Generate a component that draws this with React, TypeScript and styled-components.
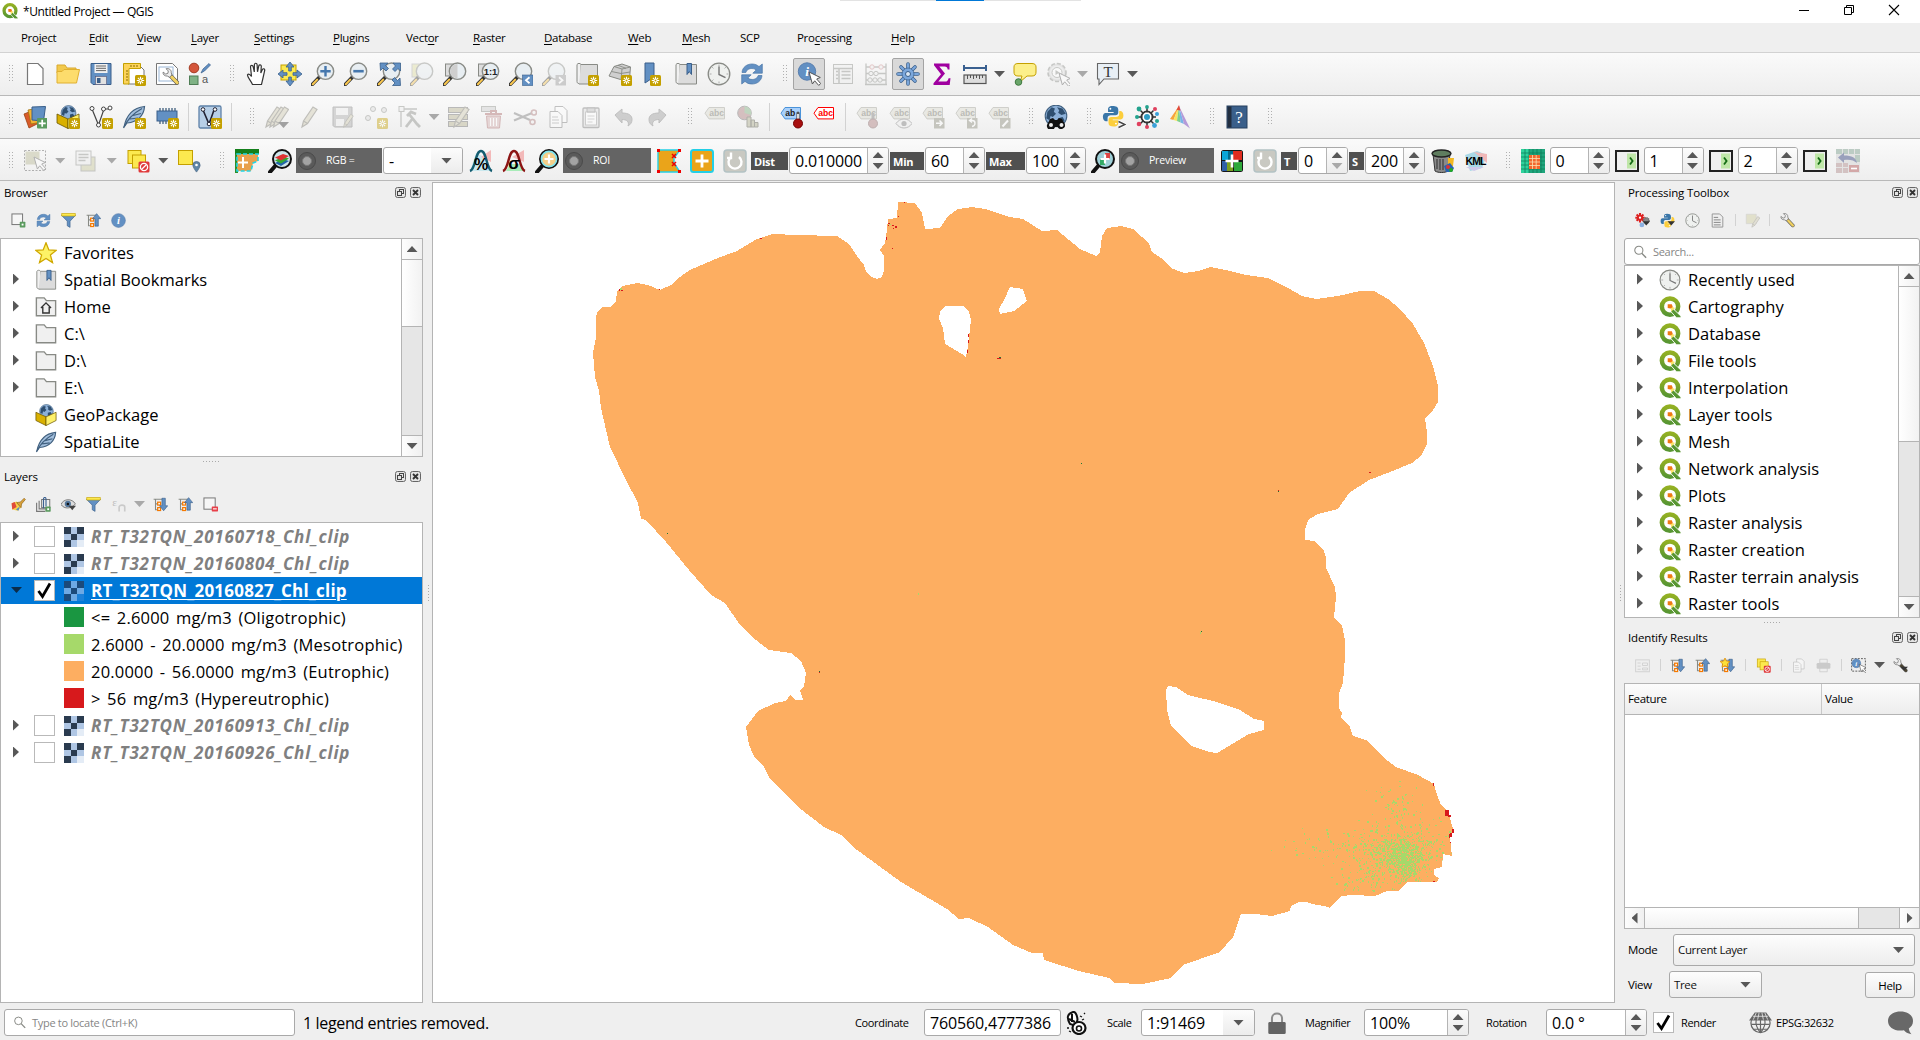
import React from "react";
import styled, { createGlobalStyle, css } from "styled-components";

/* ---------- base ---------- */

const Global = createGlobalStyle`
  *, *::before, *::after { box-sizing: border-box; }
  html, body { margin: 0; padding: 0; }
  body {
    width: 1920px; height: 1040px; overflow: hidden; background: #efefef; color: #000;
    font-family: "Open Sans", "Noto Sans", sans-serif; font-size: 11.5px; letter-spacing: -0.35px;
    line-height: 1;
  }
  svg { display: block; flex: none; }
  svg text { letter-spacing: 0; }
`;

const Window = styled.div`
  width: 1920px; height: 1040px; display: flex; flex-direction: column; background: #efefef; overflow: hidden;
`;

const TitleBar = styled.div`
  height: 23px; flex: none; display: flex; align-items: flex-start; background: #fff; padding-left: 2px;
  & > svg { margin-top: 3px; }
`;
const TitleText = styled.span`
  margin: 5px 0 0 5px; font-size: 12px; line-height: 14px; letter-spacing: -0.4px; width: 817px; white-space: nowrap;
`;
const TopStrip = styled.div`
  width: 241px; height: 1px; background: linear-gradient(90deg, #e3e3e3 96px, #0078d7 96px, #0078d7 144px, #e3e3e3 144px);
  margin-right: 717px;
`;
const WindowButtons = styled.div`
  display: flex; gap: 33px; padding-top: 4px;
`;

const MenuBar = styled.div`
  height: 30px; flex: none; display: flex; align-items: center; padding-left: 21px; border-bottom: 1px solid #d2d2d2;
`;
const MenuItem = styled.div<{ $w: number }>`
  width: ${(p) => p.$w}px; flex: none; font-size: 11.5px; letter-spacing: -0.3px; white-space: nowrap;
  u { text-decoration: underline; text-underline-offset: 2px; }
`;

/* ---------- toolbars ---------- */

const ToolBar = styled.div<{ $fields?: boolean }>`
  height: ${(p) => (p.$fields ? 42 : 43)}px; flex: none; display: flex; align-items: center; padding-top: ${(p) => (p.$fields ? 2 : 0)}px;
  background: linear-gradient(#fafafa, #eeeeee); border-bottom: 1px solid #b9b9b9;
  --arrow: ${(p) => (p.$fields ? 18.5 : 17)}px;
`;
const Slot = styled.div<{ $active?: boolean }>`
  width: 33px; height: 32px; flex: none; display: flex; align-items: center; justify-content: center;
  ${(p) => p.$active && css`
    width: 32px; margin-right: 1px; background: #d9d9d9; border: 1px solid #a4a4a4; border-radius: 2px;
  `}
`;
const ArrowSlot = styled.div`
  width: var(--arrow); flex: none; display: flex; justify-content: center;
`;
const Separator = styled.div<{ $w?: number; $h?: number }>`
  width: ${(p) => p.$w ?? 10}px; height: ${(p) => p.$h ?? 28}px; flex: none;
  background: linear-gradient(#d2d2d2, #d2d2d2) center / 1px 100% no-repeat;
`;
const Grip = styled.div<{ $first?: boolean }>`
  width: ${(p) => (p.$first ? 18 : 24.5)}px; height: 18px; flex: none; padding-left: ${(p) => (p.$first ? 8.5 : 14)}px;
  &::after {
    content: ""; display: block; width: 5px; height: 18px;
    background: radial-gradient(circle at 0.5px 0.5px, #b0b0b0 0.7px, transparent 0.8px) 0 0 / 3px 3px;
  }
`;
const DarkField = styled.div<{ $w: number }>`
  width: ${(p) => p.$w}px; height: 25px; flex: none; background: #646464; color: #fff; display: flex; align-items: center;
  gap: 10px; padding-left: 2px; font-size: 10.5px; letter-spacing: -0.2px; margin-right: 1px;
`;
const DarkTag = styled.div<{ $w: number }>`
  width: ${(p) => p.$w}px; height: 18px; flex: none; background: #505050; color: #fff; font-weight: 700; font-size: 11px;
  letter-spacing: -0.2px; line-height: 19px; padding-left: 3px; margin-right: 1px;
`;
const FieldBox = styled.div<{ $w: number; $mr?: number }>`
  width: ${(p) => p.$w}px; height: 27px; flex: none; display: flex; background: #fff; border: 1px solid #a9a9a9;
  border-radius: 3px; overflow: hidden; margin-right: ${(p) => p.$mr ?? 1}px;
`;
const FieldText = styled.div`
  flex: 1; padding-left: 5px; font-size: 16px; letter-spacing: -0.15px; line-height: 26px; white-space: nowrap; overflow: hidden;
`;
const SpinButtons = styled.div`
  width: 21px; flex: none; border-left: 1px solid #b4b4b4; background: linear-gradient(#fcfcfc, #ececec);
  display: flex; flex-direction: column; align-items: center; justify-content: center; gap: 5px;
`;
const DropEnd = styled.div`
  width: 31px; flex: none; background: linear-gradient(#fcfcfc, #ececec); display: flex; align-items: center; justify-content: center;
`;

const Tri = styled.span<{ $dir: "up" | "down" | "right" | "left"; $s?: number; $dim?: boolean; $c?: string }>`
  display: block; flex: none; background: ${(p) => p.$c ?? (p.$dim ? "#a9a9a9" : "#585858")};
  ${(p) => {
    const s = p.$s ?? 11;
    const h = Math.round(s * 0.55);
    switch (p.$dir) {
      case "up": return `width:${s}px;height:${h}px;clip-path:polygon(50% 0,100% 100%,0 100%);`;
      case "down": return `width:${s}px;height:${h}px;clip-path:polygon(0 0,100% 0,50% 100%);`;
      case "right": return `width:${h}px;height:${s}px;clip-path:polygon(0 0,100% 50%,0 100%);`;
      default: return `width:${h}px;height:${s}px;clip-path:polygon(100% 0,100% 100%,0 50%);`;
    }
  }}
`;

const Arrow = ({ dim }: { dim?: boolean }) => <ArrowSlot><Tri $dir="down" $dim={dim} /></ArrowSlot>;

const Spin = ({ w, value, mr, dim }: { w: number; value: string; mr?: number; dim?: boolean }) => (
  <FieldBox $w={w} $mr={mr}>
    <FieldText>{value}</FieldText>
    <SpinButtons><Tri $dir="up" /><Tri $dir="down" $dim={dim} /></SpinButtons>
  </FieldBox>
);

/* ---------- icons ---------- */

const B = "#6290c3";
const BD = "#3a5f8a";
const Y = "#fce94f";
const YD = "#c4a000";
const G = "#888a85";

const Badge = ({ x = 13, y = 13 }: { x?: number; y?: number }) => (
  <g transform={`translate(${x} ${y})`}>
    <rect width="11" height="11" rx="1.5" fill="#c4a000" />
    <path d="M5.5 1.8v7.4M1.8 5.5h7.4M2.9 2.9l5.2 5.2M8.1 2.9L2.9 8.1" stroke="#fff" strokeWidth="1.1" />
    <circle cx="5.5" cy="5.5" r="1.2" fill="#c4a000" stroke="#fff" strokeWidth=".7" />
  </g>
);
const Lens = ({ children, fill = "#e8eef2" }: { children?: React.ReactNode; fill?: string }) => (
  <>
    <path d="M8.3 15.2L1.2 22.6" stroke="#333" strokeWidth="3.6" strokeLinecap="round" />
    <path d="M6.2 17.6L1.8 22.2" stroke="#fcc94f" strokeWidth="2" strokeLinecap="round" />
    <circle cx="14.5" cy="9.2" r="8.2" fill={fill} stroke="#8a8c87" strokeWidth="1.4" />
    {children}
  </>
);
const Tag = ({ c = "#d8d8cc", s = "#9a9a90", t = "#6b6b60", text = "abc" }: { c?: string; s?: string; t?: string; text?: string }) => (
  <>
    <path d="M2 8.2L6 2.5h15.5v11.4H6z" fill={c} stroke={s} />
    <text x="6.3" y="11.4" fontSize="8.6" fontWeight="700" fill={t} fontFamily="Liberation Sans, sans-serif">{text}</text>
  </>
);
const Tree = ({ up }: { up?: boolean }) => (
  <>
    <path d="M1 3.5h15M4 3.5v17h5M4 11h5" fill="none" stroke={G} strokeWidth="1.7" />
    <rect x="7.5" y="8.3" width="4.6" height="4.6" fill="#fff" stroke="#f57900" strokeWidth="2" />
    <rect x="7.5" y="17" width="4.6" height="4.6" fill="#fff" stroke="#f57900" strokeWidth="2" />
    {up
      ? <path d="M17 1l6.5 8h-3.8v12h-5.4V9h-3.8z" fill={B} stroke={BD} />
      : <path d="M17 22l6.5-8h-3.8V2h-5.4v12h-3.8z" fill={B} stroke={BD} />}
  </>
);
const Cursor = ({ x = 0, y = 0 }: { x?: number; y?: number }) => (
  <path transform={`translate(${x} ${y})`} d="M0 0l3.4 12 2.3-3.2 4 4.6 2-1.8-4-4.6 3.6-1.5z" fill="#fff" stroke="#555" strokeWidth="1" />
);
const Feather = () => (
  <>
    <path d="M2 22C4 12 9 3 22.5 1.5 22 10 16 17 5 18z" fill="#a3bfdd" stroke="#41607f" strokeWidth="1.2" />
    <path d="M1.5 23C5 15 10 9 20 3.5M8 14l8-1M11 10.5l8-2" fill="none" stroke="#41607f" strokeWidth="1.2" />
  </>
);
const Globe = ({ cx = 12, cy = 12, r = 10 }: { cx?: number; cy?: number; r?: number }) => (
  <g transform={`translate(${cx} ${cy}) scale(${r / 10})`}>
    <circle r="10" fill="#8cb0d8" stroke="#41607f" strokeWidth="1" />
    <path d="M-8-4l4-4 3 1-1 3 2 2-3 3-2-1-1 4-3-2zM1-8l5 1 3 5-4 1-3-2 1-2zM2 2l4-1 2 3-3 4-3-2z" fill="#2f4f70" />
  </g>
);
const Package = () => (
  <>
    <Globe cx={12.5} cy={8} r={7.4} />
    <path d="M1 9l11 5v9.5L1 18z" fill="#d9b000" stroke="#6b5600" strokeWidth=".8" />
    <path d="M23 9l-11 5v9.5L23 18z" fill="#fdf06a" stroke="#6b5600" strokeWidth=".8" />
  </>
);
const Refresh = () => (
  <g fill={B} stroke="#4a77a8" strokeWidth=".7">
    <path d="M2 10.5C2.500 5 7 2 12 2c3 0 5.300 1 7 2.600L22.300 2v9.200h-9.500l3.400-3.300C13 5.600 7 6 5.800 10.500z" />
    <path d="M22 13.500C21.500 19 17 22 12 22c-3 0-5.300-1-7-2.600L1.700 22v-9.200h9.500l-3.400 3.300C11 18.400 17 18 18.200 13.500z" />
  </g>
);
const Clock = () => (
  <>
    <circle cx="12" cy="12" r="10.8" fill="#eff1ef" stroke={G} strokeWidth="1.3" />
    <path d="M12 2.5v2M12 19.5v2M2.500 12h2M19.500 12h2M5.200 5.200l1.200 1.200M18.800 5.200l-1.200 1.200M5.200 18.800l1.200-1.200" stroke="#aaa" />
    <path d="M12 4.500v8l6.500 3.200" fill="none" stroke="#777" strokeWidth="1.4" />
  </>
);
const Sheet = () => <path d="M4.500 1.500h10.500l5 5v16H4.500z" fill="#fff" stroke="#777" strokeWidth="1.2" />;
const Pencil = ({ x = 0 }: { x?: number }) => (
  <path transform={`translate(${x} 0)`} d="M4 22l1.500-6L15 2l4 2.500L9.500 18.500zM5.500 16l4 2.500" fill="#cfcab0" stroke="#77756a" strokeWidth="1.2" />
);
const Python = () => (
  <>
    <path d="M11.500 1C7 1 6.500 3 6.500 5v2.500h6v1H4C1.500 8.500 1 11 1 13s1 4.500 3 4.500h2V14c0-2 1.500-3 3.500-3h5c2 0 3-1.500 3-3V5c0-3-2.500-4-6-4z" fill="#3a76a8" />
    <path d="M12.500 23c4.500 0 5-2 5-4v-2.500h-6v-1H20c2.500 0 3-2.500 3-4.500s-1-4.500-3-4.500h-1.500V10c0 2-1.500 3-3.500 3h-5c-2 0-3 1.500-3 3v3c0 3 2 4 5.500 4z" fill="#fcce3c" />
    <circle cx="9" cy="4" r="1" fill="#fff" /><circle cx="15" cy="20" r="1" fill="#fff" />
  </>
);
const Wrench = ({ dark }: { dark?: boolean }) => (
  <>
    <path d="M11 10l9.500 10" stroke="#555" strokeWidth="5.6" strokeLinecap="round" />
    <path d="M13 12l7.500 8" stroke={dark ? "#4d452f" : "#f0d060"} strokeWidth="4" strokeLinecap="round" />
    <path d="M1.500 5.500L5 8.200l3-1L8.500 4 5.500 1c4-1 7.500 1.500 7 5.500l1 3-3.500 3-2.500-1.500c-4 0-6.500-2-6-5.500z" fill="#eee" stroke="#777" strokeWidth="1.2" />
  </>
);
const Layered = () => (
  <><rect x="2" y="1.5" width="13" height="13" fill={Y} stroke={YD} /><rect x="6.5" y="6" width="13" height="13" fill={Y} stroke={YD} /></>
);
const No = () => (
  <g transform="translate(12.5 12.5)"><rect width="11" height="11" rx="1.5" fill="#e0383a" /><circle cx="5.5" cy="5.5" r="3.6" fill="none" stroke="#fff" strokeWidth="1.3" /><path d="M3 8l5-5" stroke="#fff" strokeWidth="1.3" /></g>
);
const BookIcon = () => (
  <>
    <path d="M2 2.500C3 1 5 1 6 2.500v19H4c-1.500 0-2-1-2-2z" fill="#f1f1f1" stroke={G} />
    <path d="M6 2.500h16.500v19.500H4" fill="#dcdcdc" stroke={G} />
  </>
);
const Ribbon = ({ x, y, w, h }: { x: number; y: number; w: number; h: number }) => (
  <path d={`M${x} ${y}h${w}v${h}l${-w / 2}-3l${-w / 2} 3z`} fill={B} stroke={BD} />
);
const InfoDot = ({ cx = 12, cy = 12, r = 11 }: { cx?: number; cy?: number; r?: number }) => (
  <>
    <circle cx={cx} cy={cy} r={r} fill={B} stroke="#5a7fae" />
    <text x={cx} y={cy + r * 0.52} fontSize={r * 1.55} textAnchor="middle" fontStyle="italic" fontWeight="700" fill="#fff" fontFamily="Liberation Serif, serif">i</text>
  </>
);

const glyphs: Record<string, React.ReactNode> = {
  new: <Sheet />,
  open: <><path d="M1 3h8l2 3h9v5H1z" fill="#f2c94c" stroke="#d9a92e" /><path d="M1 21V9.500h5l2-2h15.500L20.500 21z" fill="#fddc6c" stroke="#e0b030" /></>,
  save: <><path d="M2 1.500h20v21H4l-2-2z" fill={B} stroke={BD} /><rect x="5.5" y="2" width="13" height="9" fill="#f1f1f1" /><path d="M7 4h10M7 6.300h10M7 8.600h10" stroke="#666" /><rect x="6.5" y="14.5" width="11" height="8" fill="#e2e2e2" stroke="#557" strokeWidth=".6" /><rect x="8" y="16" width="3.5" height="5" fill={BD} /></>,
  layout: <><path d="M6 4h12l4 4v14H6z" fill="#fff" stroke="#777" /><path d="M1.500 1.500h17v5H7v15.500H1.500z" fill="#fcd35a" stroke={YD} /><path d="M4 9h2M4 12h2M4 15h2M4 18h2M9 3v2M12 3v2M15 3v2" stroke="#8a6d00" /><Badge /></>,
  layoutmgr: <><path d="M1.500 1.500h16l5 5v16h-21z" fill="#fff" stroke="#777" /><rect x="4" y="5" width="14" height="14" fill="none" stroke="#9ab6d6" /><g transform="translate(7 6) scale(.74)"><Wrench /></g></>,
  style: <><circle cx="6" cy="6" r="4.8" fill="#d4553a" stroke="#a33b22" /><path d="M13 11l2-4 6-5.500 1.500 1.500-6 6z" fill={B} stroke={BD} strokeWidth=".7" /><rect x="1.5" y="14" width="8.5" height="8.5" fill="#7fb285" stroke="#4f7d55" /><text x="14" y="21" fontSize="11" fill="#555" fontFamily="Liberation Sans, sans-serif">a</text></>,
  hand: <path d="M7.500 22.500C6 18.500 2 15 2.500 12.800c1-1.500 3 0 4 1.700L5.500 4.800c0-2 2.300-2 2.700 0L9.300 10 9.400 2.600c.2-1.800 2.500-1.800 2.700 0l.4 7.200 1.300-6c.5-1.600 2.600-1.200 2.500.6L15.800 11l1.600-3.500c.8-1.400 2.600-.6 2.300 1l-1.700 7.500-1.500 6.500z" fill="#fff" stroke="#333" strokeWidth="1.2" />,
  pan: <><rect x="3" y="3" width="15" height="15" fill={Y} stroke={YD} /><path d="M12 0l4 5h-2.700v4H10.700V5H8zM12 24l4-5h-2.700v-4h-2.600v4H8zM0 12l5-4v2.700h4v2.600H5V16zM24 12l-5-4v2.700h-4v2.600h4V16z" fill={B} stroke={BD} strokeWidth=".8" /></>,
  zoomin: <Lens><path d="M14.500 4v10.400M9.300 9.200h10.400" stroke="#4577ad" strokeWidth="2.4" /></Lens>,
  zoomout: <Lens><path d="M9.300 9.200h10.400" stroke="#4577ad" strokeWidth="2.6" /></Lens>,
  zoomfull: <><Lens /><path d="M3 1h8L8.500 3.500l3 3-2.500 2.500-3-3L3.500 8.500zM23.500 1v8L21 6.500l-3 3L15.500 7l3-3L16 1zM23.500 23.500h-8l2.500-2.500-3-3 2.500-2.500 3 3 2.500-2.500z" fill={B} stroke={BD} strokeWidth=".8" /></>,
  zoomsel: <><rect x="2" y="2" width="13" height="13" fill="#dedc9c" stroke="#aaa" /><Lens /></>,
  zoomlayer: <><rect x="2.500" y="2" width="13" height="12" fill="#ddd" stroke={G} /><Lens><path d="M14.500 2v14.400A7.200 7.200 0 0 1 14.500 2z" fill="#cfcfcf" /></Lens></>,
  zoom11: <><rect x="2.500" y="2" width="13" height="12" fill="#ddd" stroke={G} /><Lens><text x="14.5" y="12.8" fontSize="9.5" fontWeight="700" textAnchor="middle" fill="#222" fontFamily="Liberation Sans, sans-serif">1:1</text></Lens></>,
  zoomlast: <><Lens /><rect x="13.5" y="13" width="10.5" height="10.5" fill={B} stroke={BD} strokeWidth=".6" /><path d="M20.500 15.300l-3.500 3 3.500 3" fill="none" stroke="#fff" strokeWidth="1.8" /></>,
  zoomnext: <><Lens /><rect x="13.5" y="13" width="10.5" height="10.5" fill="#999" /><path d="M17 15.300l3.500 3-3.500 3" fill="none" stroke="#fff" strokeWidth="1.8" /></>,
  newmap: <><BookIcon /><Badge /></>,
  new3d: <><path d="M1 14L6 4.500l8-2.500 8.500 3-1 12-9 .5z" fill="#cfcfcf" stroke={G} /><path d="M6 4.500l8 2.500 8.500-2M14 7l-1 10.500M3.500 9.500l9.500 2 9-1.500M10 3.300l8 3" fill="none" stroke={G} strokeWidth=".9" /><Badge /></>,
  newbm: <><Ribbon x={4} y={1} w={9} h={20} /><Badge x={9} y={13} /></>,
  bookmarks: <><BookIcon /><Ribbon x={13} y={1.5} w={4.5} h={11} /></>,
  clock: <Clock />,
  refresh: <Refresh />,
  identify: <><InfoDot cx={10} cy={9.5} r={8.7} /><Cursor x={12} y={10} /></>,
  table: <><rect x="2.5" y="2.5" width="19" height="19" fill="#eee" stroke={G} /><path d="M2.500 6.500h19M8 6.500v15M5 9.500h2M5 13h2M5 16.500h2M10.500 9.500h9M10.500 13h9M10.500 16.500h9" stroke={G} strokeWidth="1.5" /></>,
  abacus: <><path d="M2 22.500V1.500M22 22.500V1.500M2 5h20M2 11.500h20M2 18h20M1 22.500h22" stroke={G} strokeWidth="1.3" fill="none" /><g fill="#eee" stroke={G}><circle cx="8" cy="5" r="2.2" stroke="#c88" /><circle cx="17" cy="5" r="2.2" stroke="#c88" /><circle cx="7" cy="11.5" r="2.2" /><circle cx="12" cy="11.5" r="2.2" /><circle cx="6" cy="18" r="2.2" /><circle cx="11" cy="18" r="2.2" /><circle cx="16" cy="18" r="2.2" /></g></>,
  gear: <><g stroke={BD} strokeWidth="3.6" strokeLinecap="round"><path d="M12 2v20M2 12h20M5 5l14 14M19 5L5 19" /></g><g stroke="#7ba7dc" strokeWidth="2.2" strokeLinecap="round"><path d="M12 2v20M2 12h20M5 5l14 14M19 5L5 19" /></g><circle cx="12" cy="12" r="6" fill="#7ba7dc" stroke={BD} strokeWidth=".7" /><circle cx="12" cy="12" r="2.5" fill="#dce8f5" stroke={BD} /></>,
  sigma: <path d="M4 1.500h15.500v6h-1.800c-.4-2.300-1-3-3.200-3H9.300l5.700 7-6.700 8h6.700c2.200 0 3-.8 3.600-3.300h1.900L19.700 23H3.500v-1.800l7.500-9L4 3.300z" fill="#a000a0" />,
  measure: <><path d="M1 3v6M23 3v6M1 6h22" stroke="#3a6090" strokeWidth="2" /><rect x="1" y="13" width="22" height="8.5" fill="#ddd" stroke="#555" strokeWidth="1.2" /><path d="M4.500 13v4M7.500 13v3M10.500 13v4M13.500 13v3M16.500 13v4M19.500 13v3" stroke="#555" /></>,
  tips: <><path d="M5 1.500h14c3 0 4 1.500 4 3.500v5c0 2.500-1 4-4 4h-5l-7 6 2-6H5c-3 0-4-1.500-4-4V5c0-2 1-3.500 4-3.500z" fill="#fcef8a" stroke={YD} /><circle cx="5.5" cy="20" r="3.3" fill="#6aa56a" stroke="#3f7a3f" /></>,
  run: <><circle cx="11" cy="10.500" r="9" fill="#ccc" stroke={G} strokeWidth="1.600" strokeDasharray="4 2" /><circle cx="11" cy="10.500" r="7" fill="#e4e4e4" /><circle cx="11" cy="10.5" r="5" fill="#fff" stroke={G} /><path d="M9.500 8v5l4-2.500z" fill={G} /><Cursor x={13} y={11} /></>,
  text: <><path d="M1.500 1.500h21v15.500H8L3 22.500V17H1.500z" fill="#e8eff5" stroke="#666" strokeWidth="1.1" /><text x="12" y="14.5" fontSize="15" textAnchor="middle" fill="#333" fontFamily="Liberation Serif, serif">T</text></>,

  dsm: <><path d="M1 9l10-4 5 13-10 5z" fill="#d95b29" stroke="#994010" strokeWidth=".8" /><path d="M5 5l11-2 3 14-11 2z" fill="#f2b233" stroke="#a37410" strokeWidth=".8" /><path d="M9 2l13.500-.5-2 14.500-11.500-1z" fill={B} stroke={BD} /><rect x="14" y="13" width="10.5" height="10.5" rx="1" fill="#5a9a5e" /><path d="M19.200 14.800v7M15.700 18.300h7" stroke="#fff" strokeWidth="1.7" /></>,
  geopkg: <><Package /><Badge /></>,
  package: <Package />,
  shp: <><path d="M3 4l6.500 16L15 4h6" fill="none" stroke="#444" strokeWidth="1.2" /><g fill="#fff" stroke="#444"><circle cx="3" cy="3.5" r="2" /><circle cx="9.5" cy="20" r="2" /><circle cx="14.5" cy="4" r="2" /><circle cx="21" cy="3" r="2" /></g><Badge /></>,
  spatialite: <><Feather /><Badge /></>,
  feather: <Feather />,
  memory: <><path d="M5 3v16M8 3v16M11 3v16M14 3v16M17 3v16M20 3v16" stroke="#41607f" strokeWidth="1.3" /><rect x="2" y="6" width="20" height="10" fill={B} stroke={BD} /><Badge /></>,
  virtual: <><rect x="1" y="1" width="22" height="22" rx="1.5" fill="#b7cfe7" stroke="#5e81a8" strokeWidth="1.3" /><path d="M5 5l6 14 5-14" fill="none" stroke="#223" strokeWidth="1.6" /><g fill="#fff" stroke="#223"><circle cx="5" cy="4.5" r="1.8" /><circle cx="11" cy="19" r="1.8" /><circle cx="17" cy="4.5" r="1.8" /></g><Badge /></>,
  pencils: <><Pencil x={-3} /><Pencil x={1} /><Pencil x={4.5} /><path d="M13 17h11l-5.500 6z" fill="#333" /></>,
  pencil: <Pencil />,
  saveedit: <><path d="M2 2h19v20H3.500L2 20.500z" fill="#aaa" stroke="#777" /><rect x="5" y="3" width="12" height="7" fill="#eee" /><rect x="5" y="14" width="8" height="7" fill="#eee" /><g transform="translate(8 8) scale(.65)"><Pencil x={3} /></g></>,
  points: <><g fill="#ddd" stroke={G}><circle cx="4" cy="13" r="2.5" /><circle cx="9" cy="4" r="2.5" /><circle cx="20" cy="5" r="2.5" /></g><Badge /></>,
  vertex: <><path d="M4 3v19M6 4h14" stroke={G} strokeWidth="1.3" /><rect x="2" y="1.5" width="5" height="5" fill="#eee" stroke={G} /><path d="M9 22l7-9M12 9l8 10 3 3M10 11l4-4 5 2" stroke={G} strokeWidth="2.8" fill="none" /></>,
  multi: <><g fill="#b5b08c" stroke="#666"><rect x="1.5" y="2.5" width="19" height="5" /><rect x="1.5" y="9.5" width="19" height="5" /><rect x="1.5" y="16.5" width="19" height="5" /></g><Pencil x={3} /></>,
  trash: <><rect x="1.5" y="1.5" width="14" height="5" fill="#ccc" stroke={G} /><path d="M5 9h17M11 8V6h5v2" stroke="#a66" strokeWidth="2" fill="none" /><path d="M6.500 11h14l-1 12h-12z" fill="#d4b0b0" stroke="#a66" /><path d="M10.500 13v8M13.500 13v8M16.500 13v8" stroke="#fff" /></>,
  cut: <><path d="M1 8l16 7M1 15.500L19 8" stroke="#777" strokeWidth="2" /><circle cx="19.5" cy="17" r="2.5" fill="none" stroke="#a77" strokeWidth="1.6" /><circle cx="21" cy="7.5" r="2.5" fill="none" stroke="#a77" strokeWidth="1.6" /></>,
  copy: <><path d="M9 1.500h8l4 4v12H9z" fill="#fff" stroke="#777" /><path d="M4 6.500h8l4 4v12H4z" fill="#fff" stroke="#777" /><path d="M6 12h6M6 15h7M6 18h7" stroke="#999" /></>,
  paste: <><rect x="4" y="3" width="16" height="19.5" rx="1" fill="#ddd" stroke="#777" strokeWidth="1.3" /><rect x="6.5" y="7" width="11" height="13" fill="#fff" stroke="#999" /><path d="M8 3h8v4H8z" fill="#bbb" stroke="#777" /><path d="M8.500 11h7M8.500 14h7M8.500 17h5" stroke="#aaa" /></>,
  undo: <path d="M3 10l7-6v4c7 0 10 2.500 10 6.500 0 3-1.500 5-4 6.500 1.500-4-1-6.500-6-6.500v3.500z" fill="#999" stroke="#777" />,
  redo: <path d="M21 10l-7-6v4C7 8 4 10.500 4 14.500c0 3 1.500 5 4 6.500-1.500-4 1-6.500 6-6.500v3.500z" fill="#999" stroke="#777" />,
  abc: <Tag />,
  diagram: <><circle cx="8.500" cy="8" r="6.800" fill="#a77" stroke="#666" /><path d="M8.500 8V1.200A6.800 6.800 0 0 1 15 10z" fill="#7a7" /><path d="M11 12h4v10h-4zM15 15h3.500v7H15zM18.500 17.500H22V22h-3.500z" fill="#aa8" stroke="#554" /></>,
  abpin: <><Tag c="#a8d0fb" s="#4b93d9" t="#222" text="ab" /><path d="M19 8v7" stroke="#555" strokeWidth="3.2" strokeLinecap="round" /><path d="M19 9v6" stroke="#fff" strokeWidth="1.6" /><circle cx="19" cy="18.5" r="4.500" fill="#a80f0f" stroke="#730000" /></>,
  abcred: <Tag c="#fff" s="#f00" t="#f00" />,
  pin: <><Tag /><path d="M18 8v7" stroke="#777" strokeWidth="3" /><circle cx="18" cy="18.5" r="4.500" fill="#a77" stroke="#755" /></>,
  eye: <><Tag /><path d="M8 18.500c4-6 12-6 16 0-4 6-12 6-16 0z" fill="#eee" stroke="#777" /><circle cx="16" cy="18.500" r="2.6" fill="#777" /></>,
  move: <><Tag /><rect x="13" y="13" width="10.5" height="10.5" fill="#887" /><path d="M15 18.200h6M18.500 15.500l2.700 2.700-2.700 2.700" stroke="#fff" strokeWidth="1.5" fill="none" /></>,
  rotate: <><Tag /><rect x="13" y="13" width="10.5" height="10.5" fill="#887" /><path d="M18 21.500c4-1 4-6 0-6h-2M18 13.500l-2.500 2 2.500 2" stroke="#fff" strokeWidth="1.4" fill="none" /></>,
  editlab: <><Tag /><rect x="13" y="13" width="10.5" height="10.5" fill="#887" /><path d="M15.500 21.500l5.500-6" stroke="#fff" strokeWidth="2" /></>,
  binoc: <><Globe cx={12} cy={11} r={10.8} /><path d="M6 14l3-1 2 2h2l2-2 3 1 3 6a4 4 0 0 1-7.500 2h-2.500A4 4 0 0 1 3 20z" fill="#111" /><circle cx="7" cy="20" r="2.6" fill="#eee" stroke="#111" strokeWidth="1.2" /><circle cx="17.5" cy="20" r="2.6" fill="#eee" stroke="#111" strokeWidth="1.2" /></>,
  pyconsole: <><g transform="scale(.93)"><Python /></g><path d="M16.500 16.500l6.500 3-6.500 3" fill="none" stroke="#fff" strokeWidth="3" /><path d="M16.500 16.500l6.500 3-6.500 3" fill="none" stroke="#444" strokeWidth="1.4" /></>,
  python: <Python />,
  network: <><g stroke="#333" strokeWidth="1.500" fill="none"><circle cx="12" cy="12" r="5.500" strokeWidth="2" /><path d="M12 3v18M3 12h18M5.500 5.500l13 13M18.500 5.500l-13 13" /></g><circle cx="12" cy="12" r="4.500" fill="#fff" /><circle cx="12" cy="12" r="3" fill="#2e9cc4" /><g fill="#23a38e"><circle cx="4" cy="4" r="2.4" /><circle cx="12" cy="2" r="1.9" /><circle cx="2" cy="12" r="2" /><circle cx="22" cy="16" r="2" /></g><g fill="#e0405e"><circle cx="20" cy="4" r="2" /><circle cx="4" cy="19" r="2.3" /><circle cx="12" cy="22" r="2" /></g><g fill="#3aa0d8"><circle cx="22" cy="9" r="2" /><circle cx="19.5" cy="20.5" r="2.4" /></g></>,
  rainbow: <><path d="M11 1L2 14l3.500 1z" fill="#f6a43c" /><path d="M11 1L5.500 15l3.500 1z" fill="#f5e663" /><path d="M11 1L9 16l3.500 1.500z" fill="#7fd08a" /><path d="M11 1l1.500 16.500L16 19z" fill="#78b4e8" /><path d="M11 1l5 18 6 4.500z" fill="#b59ad8" /><path d="M11 0L8.500 5l4 .5z" fill="#e34a3a" /></>,
  help: <><rect x="2" y="1" width="20" height="22" fill={BD} stroke="#27415e" /><path d="M2.500 1.500h4v21h-4z" fill="#222f40" /><text x="14" y="17.5" fontSize="17" textAnchor="middle" fill="#fff" fontFamily="Liberation Serif, serif">?</text></>,

  select: <><rect x="1.5" y="1.5" width="21" height="20" fill="none" stroke="#555" strokeDasharray="2 1.5" /><rect x="2.5" y="2.5" width="14" height="13" fill="#b5b590" /><Cursor x={11} y={8} /></>,
  form: <><rect x="7" y="8" width="14" height="14" fill="#c8c898" stroke={G} /><rect x="2" y="2" width="15" height="14" fill="#eee" stroke={G} /><path d="M4.500 5.500h10M4.500 8.500h10M4.500 11.500h7" stroke={G} strokeWidth="1.3" /></>,
  deselect: <><Layered /><No /></>,
  place: <><rect x="1.5" y="1.5" width="14" height="14" fill={Y} stroke={YD} /><path d="M19.500 12.500a3.600 3.600 0 0 1 3.600 3.600c0 2.500-3.600 7-3.600 7s-3.600-4.500-3.600-7a3.600 3.600 0 0 1 3.600-3.600z" fill="#5f87a8" stroke="#41607f" strokeWidth=".7" /><circle cx="19.5" cy="16" r="1.3" fill="#fff" /></>,
  scp: <><path d="M0 0h24v5H0z" fill="#14801c" /><path d="M0 5h3v19H0z" fill="#2c8f2a" /><path d="M2 5h21v7l-5 2-2 8H2z" fill="#e8a04c" stroke="#1fd5e8" strokeWidth="1.6" strokeDasharray="4 2" /><path d="M8 8v11M3 13.500h10" stroke="#fff" strokeWidth="2" /></>,
  lensrgb: <><path d="M8 16l-6 7" stroke="#111" strokeWidth="4" strokeLinecap="round" /><circle cx="14" cy="10" r="9" fill="#cfe6ea" stroke="#111" strokeWidth="2" /><path d="M7 14l8-4 6 2-8 5z" fill="#26a" /><path d="M7 11.500l8-4 6 2-8 5z" fill="#3a3" /><path d="M7 8.500l8-3.500 6 2-8 4.500z" fill="#d33" /></>,
  curvepct: <><path d="M1 22L7 4l6 3 9 15z" fill="#c9e8ee" /><path d="M12 8l10-7v12z" fill="#f3b9b9" /><path d="M1 22C7 20 6 2 12 2s5 18 11 20" fill="none" stroke="#135c70" strokeWidth="2.4" /><text x="12" y="20.5" fontSize="16" fontWeight="700" textAnchor="middle" fontFamily="Liberation Sans, sans-serif">%</text></>,
  curvesig: <><path d="M10 8l12-7v12z" fill="#f3b9b9" /><path d="M4 22l4-7h10l4 7z" fill="#a8ecb8" /><path d="M1 22C7 20 6 2 12 2s5 18 11 20" fill="none" stroke="#8c1414" strokeWidth="2.4" /><text x="12" y="20" fontSize="17" fontWeight="700" textAnchor="middle" fontFamily="Liberation Sans, sans-serif">σ</text></>,
  lensplus: <><path d="M8 16l-6 7" stroke="#111" strokeWidth="4" strokeLinecap="round" /><circle cx="14" cy="10" r="9" fill="#f4d08a" stroke="#111" strokeWidth="2" /><circle cx="14" cy="10" r="7.6" fill="none" stroke="#7fe3ee" strokeWidth="1.6" /><path d="M14 5.500v9M9.500 10h9" stroke="#fff" strokeWidth="2.2" /></>,
  lenspreview: <><path d="M8 16l-6 7" stroke="#111" strokeWidth="4" strokeLinecap="round" /><circle cx="14" cy="10" r="9" fill="#9fd0d8" stroke="#111" strokeWidth="2" /><path d="M14 4h5v6h-5z" fill="#d44" /><path d="M9 10h5v6H9z" fill="#3a6" /><path d="M14 5.500v9M9.500 10h9" stroke="#fff" strokeWidth="2.2" /></>,
  poly: <><path d="M1 1h22l-6 8v5l6 9H1z" fill="#eaa41a" stroke="#23cfe6" strokeWidth="1.4" /><g fill="#e00"><rect width="3" height="3" /><rect x="21" width="3" height="3" /><rect y="21" width="3" height="3" /><rect x="21" y="21" width="3" height="3" /></g><path d="M15 5l4 4M19 5l-4 4M15 13l4 4M19 13l-4 4" stroke="#e00" strokeWidth="1.5" /></>,
  plus: <><rect x="1" y="1" width="22" height="22" rx="2.5" fill="#eaa41a" stroke="#23cfe6" strokeWidth="2" /><path d="M12 5.500v13M5.500 12h13" stroke="#fff" strokeWidth="2.8" /></>,
  redodim: <><rect x="1" y="1" width="22" height="22" rx="3" fill="#c9c9c2" stroke="#b3c2c4" strokeWidth="1.5" /><path d="M8 8a6.500 6.500 0 1 0 8 0M8 3.500V9h-4" fill="none" stroke="#fff" strokeWidth="2.4" /></>,
  rgbplus: <><rect x="1" y="1" width="22" height="22" rx="2.5" fill="#161616" /><path d="M2 2h6v9H2z" fill="#0aa6d8" /><path d="M8 2h5v9H8z" fill="#046a8c" /><path d="M13 2h9v9h-9z" fill="#e02d20" /><path d="M2 12h5v10H2z" fill="#2f5fa8" /><path d="M7 12h6v10H7z" fill="#7da020" /><path d="M14 13h8v9h-8z" fill="#2ea83a" /><path d="M12 5.500v13M5.500 12h13" stroke="#fff" strokeWidth="2.6" /></>,
  bin: <><path d="M2 5l2 17c3 2 10 2 13 0l2-17z" fill="#8a8a8a" stroke="#333" /><ellipse cx="10.5" cy="4.5" rx="9.5" ry="3.5" fill="#5f7d5f" stroke="#222" strokeWidth="1.4" /><path d="M6 10v10M9 10v11M12 10v11" stroke="#444" strokeWidth="1.3" /><path d="M17 9l6 0-1 8-5 1z" fill="#f2b821" /><path d="M13 17l6-3 4 5-2 4-6 0z" fill="#2a62b0" /><circle cx="17" cy="18" r="2" fill="#d33" /><circle cx="20" cy="21" r="2" fill="#2a2" /></>,
  kml: <><path d="M1 6l12-4 10 4-5 13-12 3z" fill="#a9d8e6" /><path d="M10 3l13 2v9z" fill="#f0b8b8" /><path d="M2 18l8 4 10-4z" fill="#cfc9ea" /><text x="12" y="16" fontSize="10.5" fontWeight="700" textAnchor="middle" textLength="21" fontFamily="Liberation Sans, sans-serif">KML</text></>,
  mosaic: <><rect width="24" height="24" fill="#1fa57c" /><path d="M0 0h8v24H0z" fill="#2fd29c" /><path d="M4 0v24M8 0v24M12 0v24M16 0v24M20 0v24M0 4h24M0 8h24M0 12h24M0 16h24M0 20h24" stroke="#0d7a58" strokeWidth=".7" /><rect x="8" y="6" width="11" height="14" fill="#f4662c" /><path d="M11.500 6v14M15.200 6v14M8 9.500h11M8 13h11M8 16.500h11" stroke="#fbe0b0" strokeWidth=".8" /></>,
  go: <><rect x="1" y="2" width="22" height="20" fill="#efefef" stroke="#222" strokeWidth="2" /><rect x="12" y="4.5" width="9" height="15" fill="#bfe6a8" /><path d="M15 8.500l2.600 3.500-2.600 3.500" fill="none" stroke="#136b13" strokeWidth="1.8" /></>,
  undoras: <><path d="M0 0h24v24H0z" fill="#e3e3e3" /><path d="M0 14h6v4H0zM7 14h5v4H7zM0 19h6v5H0zM7 19h5v5H7z" fill="#d3c2c2" /><path d="M0 0h6v5H0zM7 0h5v5H7zM13 0h5v5h-5zM19 0h5v5h-5zM19 6h5v7h-5z" fill="#bcccc4" /><path d="M2 8.500l6-5v3c8 0 12 2 13 7.500-3-3-8-4-13-3v3z" fill="#9aa0bc" /><rect x="13" y="16" width="10" height="7" fill="#d3a8a8" /><path d="M15 19.500h6" stroke="#fff" strokeWidth="1.6" /></>,

  addsel: <><rect x="1.5" y="1.5" width="17" height="17" fill="#f6f6f6" stroke="#777" strokeWidth="1.6" /><rect x="14" y="14" width="9" height="9" rx="1" fill="#5a9a5e" /><rect x="17" y="17" width="3" height="3" fill="#fff" /></>,
  remsel: <><rect x="1.5" y="1.5" width="18" height="18" fill="#f6f6f6" stroke="#777" strokeWidth="1.6" /><rect x="14" y="15" width="10" height="8" rx="1" fill="#e8404a" /><path d="M16 19h6" stroke="#fff" strokeWidth="1.8" /></>,
  filter: <><path d="M1 4h22l-8.500 9v10l-4.500-2.500V13z" fill={B} stroke={BD} /><path d="M1 .8h22v4H1z" fill={Y} stroke={YD} /></>,
  collapse: <Tree up />,
  expand: <Tree />,
  info: <InfoDot />,
  brush: <><path d="M1 10l8-3 8 9-6 6-9-2z" fill="#f7d04a" /><path d="M1 10l5-2 3 8-7 4z" fill="#e04a3a" /><path d="M8 20l6-5-2 7z" fill="#5a8ac0" /><path d="M9 9l6-1 6-6 2 2-6 7-1 6z" fill="#d8a13a" stroke="#8a5f14" /></>,
  group: <><path d="M1 9v14h14" fill="none" stroke="#777" strokeWidth="1.8" /><path d="M5 6v13h14" fill="none" stroke="#777" strokeWidth="1.8" /><rect x="9" y="4" width="13" height="13" fill="#eee" stroke="#777" strokeWidth="1.6" /><path d="M12 18V3c0-3 4-3 4 0v12" fill="none" stroke="#3a6090" strokeWidth="1.8" /><rect x="15" y="15" width="8.5" height="8.5" rx="1" fill="#5a9a5e" /><rect x="18" y="18" width="3" height="3" fill="#fff" /></>,
  view: <><path d="M0 12C4 2 18 2 23 11 17 19 5 20 0 12z" fill="#ddd" stroke="#777" strokeWidth="1.5" /><circle cx="11" cy="11" r="5" fill="#54779c" /><circle cx="11" cy="11" r="2" fill="#111" /><path d="M12 14h12l-6 7z" fill="#444" /></>,
  epsilon: <><text x="2" y="14" fontSize="18" fill="#777" fontFamily="Liberation Serif, serif">ε</text><path d="M13 23v-7c0-4 9-4 9 0v7" fill="none" stroke="#999" strokeWidth="2.6" /></>,
  gears: <><g stroke="#d22" strokeWidth="3.4"><path d="M8 0v15M.5 7.500h15M2.500 2.500l11 10M13.500 2.500l-11 10" /></g><circle cx="8" cy="7.5" r="4.6" fill="#d22" /><circle cx="8" cy="7.5" r="1.8" fill="#fff" /><circle cx="18" cy="12" r="4.5" fill="#888" stroke="#666" strokeDasharray="2 1" strokeWidth="2" /><circle cx="11" cy="19" r="3.8" fill="#8cb0e0" /><path d="M12 13h12l-6 7z" fill="#333" /></>,
  pydrop: <><Python /><path d="M12 13h12l-6 7z" fill="#333" /></>,
  log: <><path d="M3.500 1.500h12l5 5v16h-17z" fill="#eee" stroke="#999" strokeWidth="1.6" /><path d="M6 7h7M6 11h11M6 15h11M6 19h11" stroke="#888" strokeWidth="1.6" /></>,
  editinplace: <><path d="M2 2h16v15H2z" fill="#d0cc9a" stroke="#aaa" /><g transform="translate(5 4) scale(.85)"><Pencil x={3} /></g></>,
  wrench: <Wrench />,
  wrenchdark: <><Wrench dark /><path d="M12 14h12l-6 6z" fill="#333" /></>,
  formview: <><rect x="1" y="3" width="22" height="19" fill="#eee" stroke="#aaa" strokeWidth="1.5" /><path d="M4 8h5M4 13h5M4 18h5M12 8h8v4h-8zM12 16h8v3h-8z" stroke="#aaa" strokeWidth="1.5" fill="none" /></>,
  expandnew: <><Tree /><path d="M8 0l2.300 5 5.500.6-4 3.800 1 5.400L8 12.200 3.200 14.800l1-5.400-4-3.800L5.700 5z" fill="#fce03a" stroke="#e08a00" strokeWidth="1.2" /></>,
  print: <><path d="M6 2h12v6H6zM6 15h12v7H6z" fill="#eee" stroke="#888" /><rect x="1" y="8" width="22" height="9" rx="2" fill="#999" /></>,
  idsel: <><rect x="1" y="1" width="22" height="20" fill="none" stroke="#555" strokeWidth="1.5" strokeDasharray="3 2" /><InfoDot cx={8.5} cy={8.5} r={7} /><Cursor x={13} y={10} /></>,

  star: <path d="M12 .8l3.100 7.800 8.200.4-6.500 5.100 2.300 8.400L12 17.900 4.900 22.500l2.300-8.400L.7 9l8.200-.4z" fill="#fdf266" stroke="#d0a800" strokeWidth="1.4" />,
  home: <><path d="M1.500 2h8.500l2.500 3h10v16.500h-21z" fill="#f0f0f0" stroke={G} strokeWidth="1.5" /><path d="M6.500 13L12 7.500l5.500 5.500M8.500 12v6.500h7V12" fill="none" stroke="#333" strokeWidth="1.5" /></>,
  folder: <path d="M1.500 2h8.500l2.500 3h10v16.500h-21z" fill="#f0f0f0" stroke={G} strokeWidth="1.5" />,
  qgis: <><defs><linearGradient id="qg" x1="0" y1="0" x2="0" y2="1"><stop offset="0" stopColor="#93b023" /><stop offset="1" stopColor="#589632" /></linearGradient></defs><circle cx="12" cy="11.5" r="8.9" fill="none" stroke="url(#qg)" strokeWidth="4.9" /><path d="M14.500 13l9.500 9v1.800h-5L13 17z" fill="#589632" stroke="#fff" strokeWidth="1" /><path d="M12 11l5.500 2-4 4z" fill="#fbe36a" /><path d="M9.500 9h4.500l1 3-2.500 1.500-3-.5z" fill="#ee7913" /></>,
  search: <><circle cx="10" cy="9" r="7" fill="none" stroke={G} strokeWidth="1.8" /><path d="M15 14l7.500 8" stroke={G} strokeWidth="2.4" /></>,
  mouse: <><path d="M8 1.500c3-2 5 2 5.500 7L12 15 6 13C2 6 4 3 8 1.500z" fill="#fff" stroke="#111" strokeWidth="2" /><path d="M8 3v8M5 8l6 3" stroke="#111" strokeWidth="2" /><ellipse cx="15" cy="17" rx="6.5" ry="6" fill="#fff" stroke="#111" strokeWidth="2.2" /><circle cx="15" cy="17.5" r="2.5" fill="none" stroke="#111" strokeWidth="1.6" /><path d="M16 5l2 1M20 2l1 1M3 17h2M5 20l2 1M18 9l2-1" stroke="#111" strokeWidth="1.3" /></>,
  lock: <><path d="M6.500 11V7c0-7 11-7 11 0v4" fill="none" stroke="#8c8c8c" strokeWidth="2.2" /><rect x="2.5" y="11" width="19" height="13" rx="1.5" fill="#636363" /></>,
  crs: <><circle cx="12" cy="12.500" r="10" fill="none" stroke="#666" strokeWidth="1.3" /><path d="M2.500 14h19M5 19h14M7.500 9c-1 5 1.500 10 4.500 13.500M16.500 9c1 5-1.500 10-4.500 13.500M12 9v13.500" fill="none" stroke="#666" strokeWidth="1.2" /><path d="M6 1.500h12L24 10H0z" fill="#666" /><path d="M7.500 2l-3 7M10.500 2L9 9M13.500 2L15 9M16.500 2l3 7M4 5.500h16" stroke="#eee" strokeWidth=".8" /></>,
  bubble: <path d="M12 1.500c7 0 12 3.600 12 9 0 3.300-1.600 5.600-4 7.200.3 2.300 1.200 4 2.500 5.500-3.500-.3-6-2-7.200-3.700-1 .2-2.200.3-3.300.3-7 0-12-3.900-12-9.300s5-9 12-9z" fill="#686868" />,
};

const Icon = ({ n, s = 24, dim }: { n: string; s?: number; dim?: boolean }) => (
  <svg width={s} height={s} viewBox="0 0 24 24" opacity={dim ? 0.42 : 1}>{glyphs[n]}</svg>
);
const Tool = ({ n, dim, active }: { n: string; dim?: boolean; active?: boolean }) => (
  <Slot $active={active}><Icon n={n} dim={dim} /></Slot>
);
const Tools = ({ names, dim }: { names: string; dim?: boolean }) => (
  <>{names.split(" ").map((n, i) => <Tool key={i} n={n} dim={dim} />)}</>
);
const Knob = () => (
  <svg width="18" height="20" viewBox="0 0 18 20"><circle cx="9" cy="10" r="8.5" fill="#5a5a5a" stroke="#4a4a4a" /><circle cx="9" cy="10" r="4.500" fill="#a3a3a3" stroke="#777" /></svg>
);

/* ---------- docks ---------- */

const Body = styled.div`
  flex: 1; min-height: 0; display: flex;
`;
const LeftDock = styled.div`
  width: 423px; flex: none; display: flex; flex-direction: column;
`;
const RightDock = styled.div`
  width: 296px; flex: none; display: flex; flex-direction: column;
`;
const SideSash = styled.div<{ $w: number }>`
  width: ${(p) => p.$w}px; flex: none; padding: 404px 0 0 5px;
  &::after {
    content: ""; display: block; width: 2px; height: 17px;
    background: radial-gradient(circle at 0.5px 0.5px, #aaa 0.7px, transparent 0.8px) 0 0 / 3px 3px;
  }
`;
const RowSash = styled.div`
  height: 8px; flex: none; display: flex; justify-content: center; padding-top: 4px;
  &::after {
    content: ""; width: 17px; height: 2px;
    background: radial-gradient(circle at 0.5px 0.5px, #aaa 0.7px, transparent 0.8px) 0 0 / 3px 3px;
  }
`;
const DockTitle = styled.div`
  height: 24px; flex: none; display: flex; align-items: center; justify-content: space-between; padding: 0 2px 0 4px;
  letter-spacing: -0.15px;
`;
const DockButtons = styled.div`
  display: flex; gap: 4px; padding-bottom: 1px;
`;
const DockTools = styled.div`
  height: 33px; flex: none; display: flex; align-items: center; padding: 0 0 3px 6px;
`;
const SmallSlot = styled.div<{ $w?: number }>`
  width: ${(p) => p.$w ?? 25}px; flex: none; display: flex; justify-content: center;
`;
const ListBox = styled.div<{ $h?: number }>`
  ${(p) => (p.$h ? `height: ${p.$h}px; flex: none;` : "flex: 1; min-height: 0;")}
  display: flex; background: #fff; border: 1px solid #b4b4b4; overflow: hidden;
`;
const Rows = styled.div`
  flex: 1; min-width: 0;
`;
const Row = styled.div<{ $sel?: boolean }>`
  height: 27px; display: flex; align-items: center; padding-left: 12px; white-space: nowrap;
  font-size: 16.5px; letter-spacing: 0.02px;
  ${(p) => p.$sel && css`background: #0078d7; color: #fff;`}
`;
const Expander = styled.span<{ $w?: number; $open?: boolean }>`
  width: ${(p) => p.$w ?? 22}px; flex: none; display: flex; margin-top: -1px;
  ${(p) => p.$open && css`& > span { margin-left: -2px; }`}
`;
const RowLabel = styled.span`
  margin-left: 7px; line-height: 26px;
`;
const LegendLabel = styled.span`
  margin-left: 7px; line-height: 26px; letter-spacing: 0.2px; word-spacing: 2px;
`;
const LayerName = styled.span<{ $sel?: boolean }>`
  margin-left: 7px; font-weight: 700; line-height: 26px; font-size: 17px; letter-spacing: 0.8px;
  ${(p) => (p.$sel
    ? css`letter-spacing: 0.2px; text-decoration: underline; text-underline-offset: 2px; text-decoration-thickness: 1px;`
    : css`font-style: italic; color: #808080;`)}
`;
const Check = styled.span`
  width: 21px; height: 21px; flex: none; background: #fff; border: 1px solid #b9b9b9; display: flex; align-items: center; justify-content: center;
`;
const Swatch = styled.span<{ $c: string }>`
  width: 20px; height: 20px; flex: none; background: ${(p) => p.$c}; margin: -2px 0 0 51px;
`;
const ScrollV = styled.div`
  width: 21px; flex: none; display: flex; flex-direction: column; border-left: 1px solid #b4b4b4; background: #e6e6e6;
`;
const ScrollBtn = styled.div<{ $edge: "top" | "bottom" | "left" | "right" }>`
  width: 20px; height: ${(p) => (p.$edge === "top" || p.$edge === "bottom" ? 21 : 20)}px; flex: none;
  display: flex; align-items: center; justify-content: center;
  background: linear-gradient(90deg, #fdfdfd, #f0f0f0); border-${(p) => p.$edge}: 1px solid #b4b4b4;
`;
const ThumbV = styled.div<{ $h: number }>`
  height: ${(p) => p.$h}px; flex: none; background: linear-gradient(90deg, #fff, #f2f2f2); border-bottom: 1px solid #b4b4b4;
`;
const Fill = styled.div`flex: 1;`;
const ScrollH = styled.div`
  height: 21px; flex: none; display: flex; border-top: 1px solid #b4b4b4; background: #e6e6e6;
`;
const ThumbH = styled.div`
  width: 214px; flex: none; background: linear-gradient(#fff, #f2f2f2); border-right: 1px solid #b4b4b4;
`;

const FloatIcon = () => (
  <svg width="11" height="11" viewBox="0 0 11 11"><rect x=".5" y=".5" width="10" height="10" rx="2" fill="#e4e4e4" stroke="#666" /><rect x="4.5" y="2.5" width="4" height="4" fill="none" stroke="#444" /><rect x="2.5" y="4.5" width="4" height="4" fill="#e4e4e4" stroke="#444" /></svg>
);
const CloseIcon = () => (
  <svg width="11" height="11" viewBox="0 0 11 11"><rect x=".5" y=".5" width="10" height="10" rx="2" fill="#e4e4e4" stroke="#666" /><path d="M3 3l5 5M8 3L3 8" stroke="#333" strokeWidth="1.8" /></svg>
);
const DockHead = ({ children }: { children: React.ReactNode }) => (
  <DockTitle><span>{children}</span><DockButtons><FloatIcon /><CloseIcon /></DockButtons></DockTitle>
);
const Small = ({ n, dim, w }: { n: string; dim?: boolean; w?: number }) => (
  <SmallSlot $w={w}><Icon n={n} s={15} dim={dim} /></SmallSlot>
);
const Scroller = ({ thumb }: { thumb: number }) => (
  <ScrollV>
    <ScrollBtn $edge="bottom"><Tri $dir="up" /></ScrollBtn>
    <ThumbV $h={thumb} />
    <Fill />
    <ScrollBtn $edge="top"><Tri $dir="down" /></ScrollBtn>
  </ScrollV>
);

const RasterIcon = ({ sel }: { sel?: boolean }) => {
  const dark = sel ? "#1c4a7a" : "#2a3b4f";
  const light = sel ? "#6ea9e4" : "#afc6e4";
  const pale = sel ? "#1c80d8" : "#e4ecf6";
  const cells = [dark, light, dark, light, dark, light, dark, light, pale];
  return (
    <svg width="20" height="20" viewBox="0 0 3 3" shapeRendering="crispEdges">
      {cells.map((c, i) => <rect key={i} x={i % 3} y={Math.floor(i / 3)} width="1" height="1" fill={c} />)}
    </svg>
  );
};
const CheckMark = () => (
  <svg width="15" height="17" viewBox="0 0 15 17"><path d="M1.500 9l4 5.500L13 1.500" fill="none" stroke="#000" strokeWidth="2.8" /></svg>
);

const browserRows: [string, string, boolean][] = [
  ["star", "Favorites", false], ["bookmarks", "Spatial Bookmarks", true], ["home", "Home", true], ["folder", "C:\\", true],
  ["folder", "D:\\", true], ["folder", "E:\\", true], ["package", "GeoPackage", false], ["feather", "SpatiaLite", false],
];
const toolboxRows = ["Recently used", "Cartography", "Database", "File tools", "Interpolation", "Layer tools", "Mesh", "Network analysis", "Plots", "Raster analysis", "Raster creation", "Raster terrain analysis", "Raster tools"];
const legend: [string, string][] = [
  ["#1a9641", "<= 2.6000 mg/m3 (Oligotrophic)"], ["#a6d96a", "2.6000 - 20.0000 mg/m3 (Mesotrophic)"],
  ["#fdae61", "20.0000 - 56.0000 mg/m3 (Eutrophic)"], ["#d7191c", "> 56 mg/m3 (Hypereutrophic)"],
];

const Layer = ({ name, open }: { name: string; open?: boolean }) => (
  <Row $sel={open}>
    <Expander $w={21} $open={open}>{open ? <Tri $dir="down" $c="#0b2c4a" /> : <Tri $dir="right" />}</Expander>
    <Check>{open && <CheckMark />}</Check>
    <SmallSlot $w={9} />
    <RasterIcon sel={open} />
    <LayerName $sel={open}>{name}</LayerName>
  </Row>
);

/* ---------- map ---------- */

const MapFrame = styled.div`
  width: 1183px; flex: none; margin-top: 1px; background: #fff; border: 1px solid #b4b4b4; overflow: hidden;
`;
const LAKE = "M596 317L598 311 602 307 610 307 616 301 617 291 623 286 637 283 648 285 660 290 671 285 677 279 690 270 718 258 737 251 757 239 773 234 797 235 837 236 849 244 857 256 864 265 866 271 871 277 877 279 882 277 884 270 884 256 880 250 885 243 887 230 888 219 897 218 898 202 915 203 922 213 925 229 940 228 948 216 958 209 972 207 985 209 1010 217 1023 219 1042 231 1057 230 1080 249 1096 256 1100 252 1102 236 1107 228 1121 226 1133 229 1142 237 1149 243 1152 252 1164 260 1171 268 1184 273 1198 271 1210 267 1226 270 1246 275 1268 278 1288 288 1302 296 1316 299 1338 296 1360 291 1374 291 1388 299 1400 309 1413 324 1424 343 1433 366 1438 386 1438 402 1432 412 1425 418 1427 432 1427 444 1421 456 1412 463 1390 472 1369 480 1349 493 1338 509 1318 514 1308 520 1305 530 1305 540 1314 541 1323 549 1326 557 1326 568 1335 587 1336 597 1334 617 1342 626 1345 640 1345 657 1343 683 1339 693 1339 708 1342 713 1341 718 1349 725 1353 736 1366 740 1384 758 1396 767 1418 775 1434 784 1437 795 1441 805 1449 812 1451 823 1454 830 1450 838 1452 856 1443 854 1442 867 1434 869 1434 875 1439 878 1437 882 1407 882 1398 891 1387 891 1375 896 1352 895 1342 896 1335 902 1330 908 1325 906 1317 905 1306 902 1299 902 1291 906 1290 911 1272 916 1263 915 1257 914 1241 914 1233 937 1220 952 1183 965 1171 978 1143 984 1115 983 1109 978 1079 971 1044 960 1043 953 1032 953 1013 945 988 927 969 918 959 919 947 909 901 882 853 847 841 835 824 827 798 807 769 777 764 767 754 756 749 745 746 727 758 711 775 703 786 701 790 695 795 700 803 700 800 690 804 686 806 673 801 661 791 653 769 650 752 637 738 622 725 603 711 595 689 570 666 542 646 520 641 519 638 503 626 480 610 447 601 408 599 391 595 377 594 365 593 352 596 338ZM946 306L963 306 969 312 971 320 968 347 966 357 962 354 945 344 943 328 939 319 940 311ZM1010 287L1023 289 1027 301 1014 311 1000 314 999 309 1005 298ZM1168 686L1176 687 1188 695 1217 702 1240 710 1254 719 1264 721 1264 730 1249 734 1234 743 1217 753 1209 752 1191 746 1171 726 1167 710 1166 690Z";

const speckles = (() => {
  let seed = 20160827;
  const rnd = () => {
    seed = (seed * 1664525 + 1013904223) % 4294967296;
    return seed / 4294967296;
  };
  const gauss = () => rnd() + rnd() + rnd() + rnd() - 2;
  let d = "";
  const cloud = (cx: number, cy: number, sx: number, sy: number, n: number) => {
    for (let i = 0; i < n; i++) {
      const x = Math.round(cx + gauss() * sx * 1.73);
      const y = Math.round(cy + gauss() * sy * 1.73);
      const w = rnd() > 0.7 ? 2 : 1;
      const h = rnd() > 0.5 ? 2 : 1;
      d += `M${x} ${y}h${w}v${h}h-${w}z`;
    }
  };
  cloud(1405, 859, 7, 10, 320);
  cloud(1399, 857, 15, 11, 380);
  cloud(1390, 856, 24, 14, 240);
  cloud(1348, 844, 32, 10, 90);
  cloud(1396, 808, 12, 12, 75);
  cloud(1428, 840, 12, 12, 40);
  cloud(1362, 882, 14, 5, 45);
  return d;
})();

const LakeMap = () => (
  <svg width="1181" height="819" viewBox="433 183 1181 819" shapeRendering="crispEdges">
    <clipPath id="lake"><path d={LAKE} clipRule="evenodd" /></clipPath>
    <path d={LAKE} fill="#fdae61" fillRule="evenodd" />
    <g clipPath="url(#lake)">
      <path d={speckles} fill="#a6d96a" />
      <path d="M620 288h2v2h-2zM889 224h2v1h-2zM918 593h1v2h-1zM1200 632h1v2h-1z" fill="#a6d96a" />
    </g>
    <path d="M619 289h1v2h-1zM621 290h2v1h-2zM659 289h1v1h-1zM760 238h2v1h-2zM888 223h2v1h-2zM888 225h1v1h-1zM892 225h2v1h-2zM895 226h2v2h-2zM893 228h1v1h-1zM886 237h1v3h-1zM892 248h1v1h-1zM898 216h1v1h-1zM904 202h1v1h-1zM968 334h1v3h-1zM968 340h1v3h-1zM967 350h1v3h-1zM997 358h4v1h-4zM819 672h1v1h-1zM1278 490h1v1h-1zM1369 472h2v1h-2zM1433 783h1v3h-1zM1445 810h4v5h2v2h-3v-1h-3zM1452 829h2v4h-2zM1450 833h2v4h-2v1h-1v-4h1zM1450 842h1v1h-1zM1433 881h2v1h-2z" fill="#d7191c" />
    <path d="M999 357h2v1h-2zM667 533h1v1h-1zM1081 463h1v1h-1zM1201 631h1v1h-1zM819 671h1v1h-1zM1278 491h1v1h-1z" fill="#1a7a35" />
  </svg>
);

/* ---------- right-side forms ---------- */

const SearchBox = styled.div<{ $w?: number }>`
  ${(p) => (p.$w ? `width: ${p.$w}px;` : "")} height: 27px; flex: none; background: #fff; border: 1px solid #a9a9a9;
  border-radius: 3px; display: flex; align-items: center; gap: 6px; padding-left: 8px; color: #858585; letter-spacing: -0.3px; font-size: 11px;
`;
const Table = styled.div`
  height: 246px; flex: none; background: #fff; border: 1px solid #b4b4b4; display: flex; flex-direction: column;
`;
const TableHead = styled.div`
  height: 31px; flex: none; display: flex; background: linear-gradient(#fcfcfc, #ededed); border-bottom: 1px solid #b4b4b4;
`;
const HeadCell = styled.div<{ $w?: number }>`
  ${(p) => (p.$w ? `width: ${p.$w}px; border-right: 1px solid #c8c8c8;` : "flex: 1;")} padding-left: 3px; line-height: 30px;
`;
const FormRow = styled.div<{ $label: number }>`
  display: flex; align-items: center; padding: 5px 5px 0 4px;
  & > span:first-child { width: ${(p) => p.$label}px; flex: none; }
`;
const Combo = styled.div<{ $w: number; $h: number }>`
  width: ${(p) => p.$w}px; height: ${(p) => p.$h}px; flex: none; display: flex; align-items: center; justify-content: space-between;
  border: 1px solid #a9a9a9; border-radius: 3px; background: linear-gradient(#fdfdfd, #ededed); padding: 0 10px 0 4px; color: #111;
`;
const Button = styled.div`
  width: 50px; height: 26px; margin-left: auto; border: 1px solid #a9a9a9; border-radius: 3px;
  background: linear-gradient(#fdfdfd, #ededed); text-align: center; line-height: 25px;
`;

/* ---------- status bar ---------- */

const StatusBar = styled.div`
  height: 37px; flex: none; display: flex; align-items: center; padding: 2px 0 0 4px;
`;
const Message = styled.span`
  width: 551px; padding-left: 8px; font-size: 16px; letter-spacing: -0.35px; white-space: nowrap;
`;
const StatusLabel = styled.span<{ $w: number }>`
  width: ${(p) => p.$w}px; flex: none; font-size: 11px; letter-spacing: -0.35px; white-space: nowrap;
`;
const StatusIcon = styled.span<{ $w: number }>`
  width: ${(p) => p.$w}px; flex: none; display: flex; justify-content: center;
`;

const menus: [React.ReactNode, number][] = [
  [<>Pro<u>j</u>ect</>, 68], [<><u>E</u>dit</>, 48], [<><u>V</u>iew</>, 54], [<><u>L</u>ayer</>, 63], [<><u>S</u>ettings</>, 79],
  [<><u>P</u>lugins</>, 73], [<>Vect<u>o</u>r</>, 67], [<><u>R</u>aster</>, 71], [<><u>D</u>atabase</>, 84], [<><u>W</u>eb</>, 54],
  [<><u>M</u>esh</>, 58], [<>SCP</>, 57], [<>Pro<u>c</u>essing</>, 94], [<><u>H</u>elp</>, 60],
];

export default function App() {
  return (
    <Window>
      <Global />
      <TitleBar>
        <Icon n="qgis" s={16} />
        <TitleText>*Untitled Project — QGIS</TitleText>
        <TopStrip />
        <WindowButtons>
          <svg width="12" height="12" viewBox="0 0 12 12"><path d="M1 6.500h10" stroke="#000" /></svg>
          <svg width="12" height="12" viewBox="0 0 12 12"><path d="M1.500 3.500h7v7h-7zM3.500 3V1.500h7v7H9" fill="none" stroke="#000" /></svg>
          <svg width="12" height="12" viewBox="0 0 12 12"><path d="M1 1l10 10M11 1L1 11" stroke="#000" strokeWidth="1.1" /></svg>
        </WindowButtons>
      </TitleBar>

      <MenuBar>{menus.map(([m, w], i) => <MenuItem key={i} $w={w}>{m}</MenuItem>)}</MenuBar>

      <ToolBar>
        <Grip $first />
        <Tools names="new open save layout layoutmgr style" />
        <Grip />
        <Tools names="hand pan zoomin zoomout zoomfull" />
        <Tool n="zoomsel" dim />
        <Tools names="zoomlayer zoom11 zoomlast" />
        <Tool n="zoomnext" dim />
        <Tools names="newmap new3d newbm bookmarks clock refresh" />
        <Grip />
        <Tool n="identify" active />
        <Tools names="table abacus" dim />
        <Tool n="gear" active />
        <Tools names="sigma measure" />
        <Arrow />
        <Tool n="tips" />
        <Tool n="run" dim />
        <Arrow dim />
        <Tool n="text" />
        <Arrow />
      </ToolBar>

      <ToolBar>
        <Grip $first />
        <Tools names="dsm geopkg shp spatialite memory" />
        <Separator />
        <Tool n="virtual" />
        <Separator />
        <Grip />
        <Tools names="pencils pencil saveedit points vertex" dim />
        <Arrow dim />
        <Tools names="multi trash cut copy paste undo redo" dim />
        <Grip />
        <Tools names="abc diagram" dim />
        <Separator />
        <Tools names="abpin abcred" />
        <Separator />
        <Tools names="pin eye move rotate editlab" dim />
        <Grip />
        <Tool n="binoc" />
        <Grip />
        <Tools names="pyconsole network rainbow" />
        <Grip />
        <Tool n="help" />
        <Grip />
      </ToolBar>

      <ToolBar $fields>
        <Grip $first />
        <Tool n="select" dim />
        <Arrow dim />
        <Tool n="form" dim />
        <Arrow dim />
        <Tool n="deselect" />
        <Arrow />
        <Tool n="place" />
        <Grip />
        <Tools names="scp lensrgb" />
        <DarkField $w={86}><Knob />RGB =</DarkField>
        <FieldBox $w={80}><FieldText>-</FieldText><DropEnd><Tri $dir="down" /></DropEnd></FieldBox>
        <Tools names="curvepct curvesig lensplus" />
        <DarkField $w={88}><Knob />ROI</DarkField>
        <Tools names="poly plus redodim" />
        <DarkTag $w={37}>Dist</DarkTag>
        <Spin w={100} value="0.010000" />
        <DarkTag $w={34}>Min</DarkTag>
        <Spin w={60} value="60" />
        <DarkTag $w={39}>Max</DarkTag>
        <Spin w={60} value="100" mr={0} />
        <Tool n="lenspreview" />
        <DarkField $w={95}><Knob />Preview</DarkField>
        <Tools names="rgbplus redodim" />
        <DarkTag $w={16}>T</DarkTag>
        <Spin w={50} value="0" dim />
        <DarkTag $w={15}>S</DarkTag>
        <Spin w={60} value="200" mr={1} />
        <Tools names="bin kml" />
        <Grip />
        <Tool n="mosaic" />
        <Spin w={60} value="0" />
        <Tool n="go" />
        <Spin w={60} value="1" />
        <Tool n="go" />
        <Spin w={60} value="2" />
        <Tool n="go" />
        <Tool n="undoras" />
      </ToolBar>

      <Body>
        <LeftDock>
          <DockHead>Browser</DockHead>
          <DockTools>
            <Small n="addsel" /><Small n="refresh" /><Small n="filter" /><Small n="collapse" /><Small n="info" />
          </DockTools>
          <ListBox $h={219}>
            <Rows>
              {browserRows.map(([ic, label, exp]) => (
                <Row key={label}>
                  <Expander>{exp && <Tri $dir="right" />}</Expander>
                  <Icon n={ic} s={22} />
                  <RowLabel>{label}</RowLabel>
                </Row>
              ))}
            </Rows>
            <Scroller thumb={67} />
          </ListBox>
          <RowSash />
          <DockHead>Layers</DockHead>
          <DockTools>
            <Small n="brush" /><Small n="group" /><Small n="view" /><Small n="filter" /><Small n="epsilon" dim />
            <SmallSlot $w={17}><Tri $dir="down" $dim /></SmallSlot>
            <Small n="expand" /><Small n="collapse" /><Small n="remsel" />
          </DockTools>
          <ListBox>
            <Rows>
              <Layer name="RT_T32TQN_20160718_Chl_clip" />
              <Layer name="RT_T32TQN_20160804_Chl_clip" />
              <Layer name="RT_T32TQN_20160827_Chl_clip" open />
              {legend.map(([c, t]) => (
                <Row key={t}><Swatch $c={c} /><LegendLabel>{t}</LegendLabel></Row>
              ))}
              <Layer name="RT_T32TQN_20160913_Chl_clip" />
              <Layer name="RT_T32TQN_20160926_Chl_clip" />
            </Rows>
          </ListBox>
        </LeftDock>
        <SideSash $w={9} />
        <MapFrame><LakeMap /></MapFrame>
        <SideSash $w={9} />
        <RightDock>
          <DockHead>Processing Toolbox</DockHead>
          <DockTools>
            <Small n="gears" /><Small n="pydrop" /><Small n="clock" /><Small n="log" />
            <Separator $w={11} $h={12} /><Small n="editinplace" dim w={23} /><Separator $w={11} $h={12} /><Small n="wrench" w={24} />
          </DockTools>
          <SearchBox><Icon n="search" s={14} />Search...</SearchBox>
          <ListBox $h={353}>
            <Rows>
              {toolboxRows.map((t, i) => (
                <Row key={t}>
                  <Expander>{<Tri $dir="right" />}</Expander>
                  <Icon n={i ? "qgis" : "clock"} s={22} />
                  <RowLabel>{t}</RowLabel>
                </Row>
              ))}
            </Rows>
            <Scroller thumb={155} />
          </ListBox>
          <RowSash />
          <DockHead>Identify Results</DockHead>
          <DockTools>
            <Small n="formview" dim /><Separator $w={10} $h={12} /><Small n="expand" /><Small n="collapse" /><Small n="expandnew" />
            <Separator $w={11} $h={12} /><Small n="deselect" /><Separator $w={10} $h={12} /><Small n="copy" dim /><Small n="print" dim />
            <Separator $w={10} $h={12} /><Small n="idsel" /><SmallSlot $w={17}><Tri $dir="down" /></SmallSlot><Small n="wrenchdark" />
          </DockTools>
          <Table>
            <TableHead><HeadCell $w={197}>Feature</HeadCell><HeadCell>Value</HeadCell></TableHead>
            <Fill />
            <ScrollH>
              <ScrollBtn $edge="right"><Tri $dir="left" /></ScrollBtn>
              <ThumbH />
              <Fill />
              <ScrollBtn $edge="left"><Tri $dir="right" /></ScrollBtn>
            </ScrollH>
          </Table>
          <FormRow $label={45}><span>Mode</span><Combo $w={242} $h={32}>Current Layer<Tri $dir="down" /></Combo></FormRow>
          <FormRow $label={41}><span>View</span><Combo $w={93} $h={27}>Tree<Tri $dir="down" /></Combo><Button>Help</Button></FormRow>
        </RightDock>
      </Body>

      <StatusBar>
        <SearchBox $w={291}><Icon n="search" s={13} />Type to locate (Ctrl+K)</SearchBox>
        <Message>1 legend entries removed.</Message>
        <Fill />
        <StatusLabel $w={69}>Coordinate</StatusLabel>
        <FieldBox $w={137} $mr={0}><FieldText>760560,4777386</FieldText></FieldBox>
        <StatusIcon $w={30}><Icon n="mouse" /></StatusIcon>
        <StatusIcon $w={16} />
        <StatusLabel $w={34}>Scale</StatusLabel>
        <FieldBox $w={114} $mr={0}><FieldText>1:91469</FieldText><DropEnd><Tri $dir="down" /></DropEnd></FieldBox>
        <StatusIcon $w={44}><Icon n="lock" s={22} /></StatusIcon>
        <StatusIcon $w={6} />
        <StatusLabel $w={59}>Magnifier</StatusLabel>
        <Spin w={105} value="100%" mr={17} />
        <StatusLabel $w={60}>Rotation</StatusLabel>
        <Spin w={101} value="0.0 °" mr={6} />
        <Check><CheckMark /></Check>
        <StatusIcon $w={7} />
        <StatusLabel $w={68}>Render</StatusLabel>
        <Icon n="crs" s={23} />
        <StatusIcon $w={4} />
        <StatusLabel $w={112}>EPSG:32632</StatusLabel>
        <Icon n="bubble" s={25} />
        <StatusIcon $w={7} />
      </StatusBar>
    </Window>
  );
}
